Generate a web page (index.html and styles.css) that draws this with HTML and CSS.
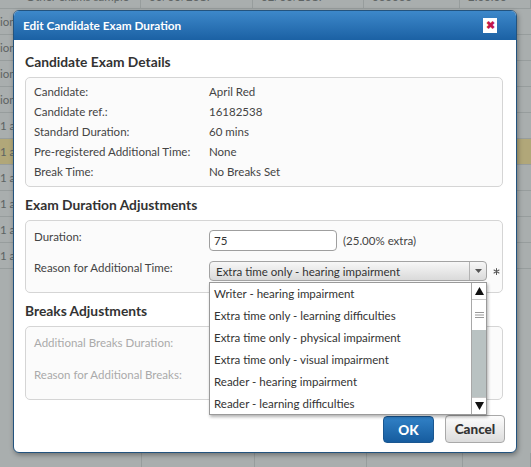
FILE: index.html
```html
<!DOCTYPE html>
<html>
<head>
<meta charset="utf-8">
<link rel="stylesheet" href="styles.css">
</head>
<body>
<div class="bg">
  <div class="bg-row top"><div>Other exams sample</div><div>03/03/2017</div><div>02/03/2017</div><div>000000</div><div>2.00.00</div></div>
  <div class="bg-row"><div class="cut">ion</div><div></div><div></div><div></div><div></div></div>
  <div class="bg-row"><div class="cut">ion</div><div></div><div></div><div></div><div></div></div>
  <div class="bg-row"><div class="cut">ion</div><div></div><div></div><div></div><div></div></div>
  <div class="bg-row"><div class="cut">ion</div><div></div><div></div><div></div><div></div></div>
  <div class="bg-row"><div class="cut">1 am</div><div></div><div></div><div></div><div></div></div>
  <div class="bg-row hl"><div class="cut">1 am</div><div></div><div></div><div></div><div></div></div>
  <div class="bg-row"><div class="cut">1 am</div><div></div><div></div><div></div><div></div></div>
  <div class="bg-row"><div class="cut">1 am</div><div></div><div></div><div></div><div></div></div>
  <div class="bg-row"><div class="cut">1 am</div><div></div><div></div><div></div><div></div></div>
  <div class="bg-row last"><div class="cut">1 am</div><div></div><div></div><div></div><div></div></div>
  <div class="bg-gap"></div>
  <div class="bg-foot"><div></div><div></div><div></div><div></div><div></div></div>
</div>

<div class="dialog">
  <div class="titlebar">
    <span>Edit Candidate Exam Duration</span>
    <span class="close">&#x2716;</span>
  </div>
  <div class="dbody">
    <h3 class="heading first">Candidate Exam Details</h3>
    <div class="box details">
      <div class="drow"><span>Candidate:</span><span>April Red</span></div>
      <div class="drow"><span>Candidate ref.:</span><span>16182538</span></div>
      <div class="drow"><span>Standard Duration:</span><span>60 mins</span></div>
      <div class="drow"><span>Pre-registered Additional Time:</span><span>None</span></div>
      <div class="drow"><span>Break Time:</span><span>No Breaks Set</span></div>
    </div>

    <h3 class="heading">Exam Duration Adjustments</h3>
    <div class="box form">
      <div class="frow">
        <span class="flabel">Duration:</span>
        <div class="fctl"><div class="input">75</div><span class="extra">(25.00% extra)</span></div>
      </div>
      <div class="frow">
        <span class="flabel">Reason for Additional Time:</span>
        <div class="fctl">
          <div class="selwrap">
            <div class="select"><span class="seltext">Extra time only - hearing impairment</span><span class="selbtn"><svg width="7" height="4" viewBox="0 0 7 4"><path d="M0 0h7L3.5 4z" fill="#555"/></svg></span></div>
            <div class="dropdown">
              <div class="items">
                <div class="item">Writer - hearing impairment</div>
                <div class="item">Extra time only - learning difficulties</div>
                <div class="item">Extra time only - physical impairment</div>
                <div class="item">Extra time only - visual impairment</div>
                <div class="item">Reader - hearing impairment</div>
                <div class="item">Reader - learning difficulties</div>
              </div>
              <div class="sbar">
                <div class="sbtn"><svg width="9" height="8" viewBox="0 0 9 8"><path d="M4.5 0L9 8H0z" fill="#111"/></svg></div>
                <div class="thumb"><svg width="9" height="6" viewBox="0 0 9 6"><path d="M0 .5h9M0 3h9M0 5.5h9" stroke="#999" stroke-width="1"/></svg></div>
                <div class="track"></div>
                <div class="sbtn down"><svg width="9" height="8" viewBox="0 0 9 8"><path d="M0 0h9L4.5 8z" fill="#111"/></svg></div>
              </div>
            </div>
          </div>
          <span class="req"><svg width="7" height="7" viewBox="0 0 9 9"><g stroke="#555" stroke-width="1.3" stroke-linecap="round"><path d="M4.5 0.8v7.4M1.3 2.6l6.4 3.8M1.3 6.4l6.4-3.8"/></g></svg></span>
        </div>
      </div>
    </div>

    <h3 class="heading">Breaks Adjustments</h3>
    <div class="box form disabled">
      <div class="frow"><span class="flabel">Additional Breaks Duration:</span><div class="fctl"></div></div>
      <div class="frow"><span class="flabel">Reason for Additional Breaks:</span><div class="fctl"></div></div>
    </div>

    <div class="buttons">
      <button class="btn ok">OK</button>
      <button class="btn cancel">Cancel</button>
    </div>
  </div>
</div>
</body>
</html>
```
FILE: styles.css
```css
html, body {
  margin: 0;
  padding: 0;
}
body {
  width: 531px;
  height: 467px;
  overflow: hidden;
  position: relative;
  background: #a9aeae;
  font-family: "Lato", "Open Sans", sans-serif;
}

/* background table (under overlay) */
.bg {
  margin-top: -17px;
}
.bg-row {
  display: grid;
  grid-template-columns: 141px 112px 111px 96px 1fr;
  height: 26px;
  box-sizing: border-box;
  border-bottom: 1px solid #979d9d;
}
.bg-row > div {
  font-size: 11.5px;
  line-height: 26px;
  color: #5d6363;
  white-space: nowrap;
  overflow: hidden;
  padding-left: 8px;
}
.bg-row.top > div {
  border-right: 1px solid #979d9d;
  line-height: 28px;
}
.bg-row.top > div:first-child {
  padding-left: 26px;
}
.bg-row > .cut {
  padding-left: 0;
}
.bg-row.hl {
  background: #b1a779;
}
.bg-gap {
  height: 184px;
}
.bg-foot {
  display: grid;
  grid-template-columns: 142px 113px 112px 96px 1fr;
  height: 20px;
}
.bg-foot > div {
  border-right: 1px solid #979d9d;
}

/* dialog */
.dialog {
  position: absolute;
  left: 13px;
  top: 10px;
  width: 504px;
  height: 443px;
  box-sizing: border-box;
  border: 1px solid #23537e;
  border-radius: 6px;
  background: #fff;
  box-shadow: 1px 2px 5px rgba(0, 0, 0, 0.35);
}
.titlebar {
  height: 29px;
  border-radius: 5px 5px 0 0;
  background: linear-gradient(#3d88ca, #1b61a4);
  display: flex;
  align-items: center;
  justify-content: space-between;
  padding: 0 19px 0 9px;
  color: #fff;
  font-weight: bold;
  font-size: 11.8px;
}
.close {
  width: 14px;
  height: 15px;
  background: #fff;
  color: #c2174c;
  font-size: 10.5px;
  line-height: 15px;
  text-align: center;
}
.dbody {
  padding: 0 13px 0 11px;
}
.heading {
  margin: 9px 0 6px;
  font-size: 13.8px;
  line-height: 18px;
  font-weight: bold;
  color: #333;
}
.heading.first {
  margin-top: 13px;
}
.box {
  border: 1px solid #d5d5d5;
  border-radius: 5px;
  background: #fbfbfb;
}
.details {
  padding: 3px 8px 5px;
}
.drow {
  display: grid;
  grid-template-columns: 175px 1fr;
  height: 20px;
  line-height: 21px;
  font-size: 11.5px;
  color: #444;
}
.form {
  padding: 9px 8px 11px;
  display: flex;
  flex-direction: column;
  gap: 10px;
}
.form.disabled {
  gap: 11px;
  padding-bottom: 10px;
}
.frow {
  display: grid;
  grid-template-columns: 175px 1fr;
  height: 21px;
  font-size: 11.5px;
  color: #444;
}
.frow:nth-child(2) {
  height: 20px;
}
.disabled .frow {
  height: 21px;
  color: #aaa;
}
.flabel {
  line-height: 14px;
}
.fctl {
  display: flex;
  align-items: center;
}
.input {
  width: 128px;
  height: 21px;
  box-sizing: border-box;
  border: 1px solid #9f9f9f;
  border-radius: 4px;
  background: #fff;
  padding-left: 4px;
  line-height: 20px;
  color: #333;
}
.extra {
  margin-left: 6px;
}
.selwrap {
  position: relative;
}
.select {
  width: 278px;
  height: 20px;
  box-sizing: border-box;
  border: 1px solid #a3a3a3;
  border-radius: 4px;
  background: linear-gradient(#f7f7f7, #dadada);
  display: flex;
  color: #333;
}
.seltext {
  flex: 1;
  padding-left: 6px;
  line-height: 19px;
}
.selbtn {
  width: 16px;
  border-left: 1px solid #b3b3b3;
  display: flex;
  align-items: center;
  justify-content: center;
}
.req {
  margin-left: 6px;
  display: flex;
}
.dropdown {
  position: absolute;
  left: 0;
  top: 21px;
  width: 278px;
  height: 133px;
  box-sizing: border-box;
  border: 1px solid #9a9a9a;
  background: #fff;
  box-shadow: 1px 2px 3px rgba(0, 0, 0, 0.3);
  display: flex;
  z-index: 5;
}
.items {
  flex: 1;
}
.item {
  height: 22px;
  line-height: 22px;
  padding-left: 4px;
  color: #333;
  white-space: nowrap;
}
.sbar {
  width: 14px;
  border-left: 1px solid #a8a8a8;
  display: flex;
  flex-direction: column;
  background: #fff;
}
.sbtn {
  height: 17px;
  display: flex;
  align-items: center;
  justify-content: center;
  border-bottom: 1px solid #c8c8c8;
  box-sizing: border-box;
}
.sbtn.down {
  border-bottom: 0;
  border-top: 1px solid #c8c8c8;
}
.thumb {
  height: 30px;
  display: flex;
  align-items: center;
  justify-content: center;
}
.track {
  flex: 1;
  background: #b9c2c2;
}
.buttons {
  display: flex;
  justify-content: flex-end;
  align-items: flex-end;
  gap: 11px;
  margin-top: 15px;
  margin-right: -2px;
}
.btn {
  font-family: inherit;
  font-weight: 900;
  font-size: 13.5px;
  border-radius: 4px;
  padding: 0;
  box-sizing: border-box;
}
.ok {
  width: 51px;
  height: 27px;
  color: #fff;
  border: 1px solid #1a5791;
  background: linear-gradient(#3181c6, #165c9f);
}
.cancel {
  width: 60px;
  height: 28px;
  color: #333;
  border: 1px solid #a9a9a9;
  background: linear-gradient(#fdfdfd, #dcdcdc);
}
```
